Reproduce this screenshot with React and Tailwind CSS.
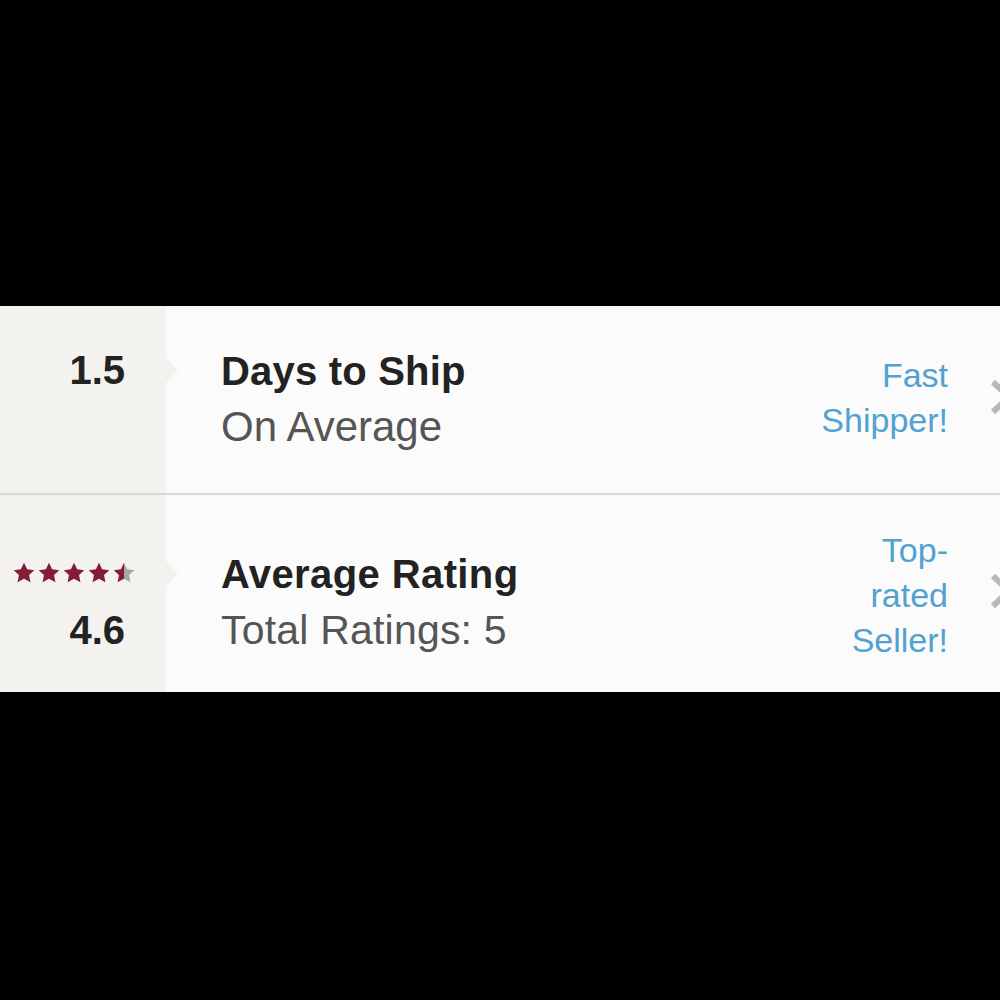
import React from "react";

const STAR = "M12 0.8l3.4 7.1 7.8 1-5.7 5.4 1.5 7.8L12 18.3l-7 3.8 1.5-7.8L0.8 8.9l7.8-1z";

function Stars() {
  return (
    <div className="flex gap-[3px]">
      {[0, 1, 2, 3].map((i) => (
        <svg key={i} width="22" height="22" viewBox="0 0 24 24">
          <path d={STAR} fill="#871d34" />
        </svg>
      ))}
      <svg width="22" height="22" viewBox="0 0 24 24">
        <defs>
          <linearGradient id="half" x1="0" x2="1" y1="0" y2="0">
            <stop offset="50%" stopColor="#871d34" />
            <stop offset="50%" stopColor="#a6a6a6" />
          </linearGradient>
        </defs>
        <path d={STAR} fill="url(#half)" />
      </svg>
    </div>
  );
}

function Chevron({ top }) {
  return (
    <svg
      className="absolute left-[989px]"
      style={{ top }}
      width="26"
      height="38"
      viewBox="0 0 26 38"
    >
      <path d="M4 4 L20 19 L4 34" fill="none" stroke="#b8b8b8" strokeWidth="6" />
    </svg>
  );
}

function Notch({ top }) {
  return (
    <div
      className="absolute left-[166px] w-0 h-0 border-y-[13px] border-y-transparent border-l-[12px] border-l-[#f3f2ef]"
      style={{ top }}
    />
  );
}

export default function App() {
  return (
    <div
      className="w-[1000px] h-[1000px] bg-black overflow-hidden pt-[306px]"
      style={{ fontFamily: '"Liberation Sans", Arial, sans-serif' }}
    >
      <div className="bg-[#fbfbfb]">
        {/* Row 1 */}
        <div className="relative flex h-[189px] border-b-2 border-[#dcd8d6]">
          <div className="w-[166px] bg-[#f3f2ef] flex justify-end pr-[41px] pt-[36px]">
            <div className="text-[40px] leading-[56px] font-bold text-[#222222]">1.5</div>
          </div>
          <Notch top="51px" />
          <div className="flex-1 pl-[55px] pt-[37px]">
            <div className="text-[40px] leading-[56px] font-bold text-[#222222] tracking-[0.2px]">Days to Ship</div>
            <div className="text-[42px] leading-[56px] text-[#555555]">On Average</div>
          </div>
          <div className="w-[200px] pr-[52px] pt-[47px] text-right text-[34px] leading-[45px] text-[#52a2d0]">
            Fast
            <br />
            Shipper!
          </div>
          <Chevron top="72px" />
        </div>
        {/* Row 2 */}
        <div className="relative flex h-[197px]">
          <div className="w-[166px] bg-[#f3f2ef] flex flex-col items-end pr-[31px] pt-[67px]">
            <Stars />
            <div className="text-[40px] leading-[56px] font-bold text-[#222222] mr-[10px] mt-[18px]">4.6</div>
          </div>
          <Notch top="66px" />
          <div className="flex-1 pl-[55px] pt-[51px]">
            <div className="text-[40px] leading-[56px] font-bold text-[#222222] tracking-[0.4px]">Average Rating</div>
            <div className="text-[41px] leading-[56px] text-[#555555] tracking-[0.2px]">Total Ratings: 5</div>
          </div>
          <div className="w-[200px] pr-[52px] pt-[33px] text-right text-[34px] leading-[45px] text-[#52a2d0]">
            Top-
            <br />
            rated
            <br />
            Seller!
          </div>
          <Chevron top="77px" />
        </div>
      </div>
    </div>
  );
}
